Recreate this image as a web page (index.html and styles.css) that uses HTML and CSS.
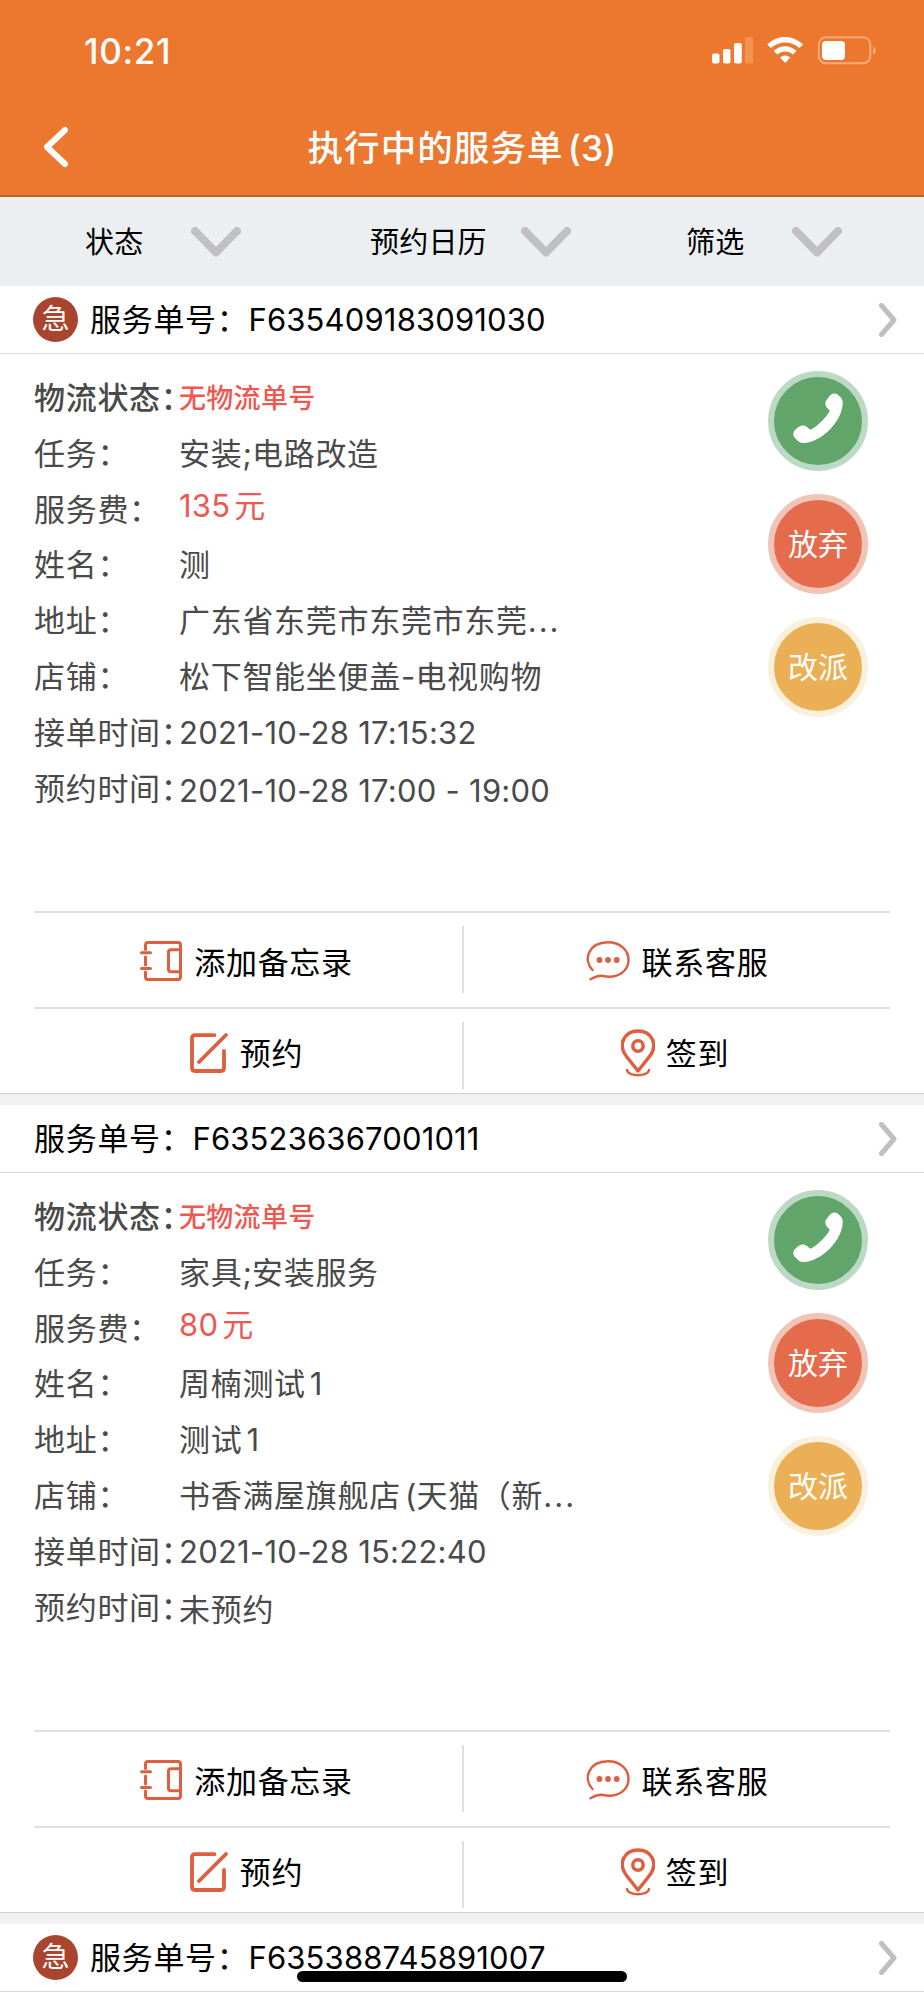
FILE: index.html
```
<!DOCTYPE html>
<html lang="zh-CN">

<head>
    <meta charset="UTF-8">
    <meta name="viewport" content="width=device-width, initial-scale=1.0">
    <title>执行中的服务单</title>
    <link rel="stylesheet" href="styles.css">
</head>

<body>
    <!-- shared icons -->
    <svg class="sprite">
        <symbol id="down" viewBox="0 0 50 30">
            <path d="M4 4 L25 25.500 L46 4" />
        </symbol>
        <symbol id="right" viewBox="0 0 18 34">
            <path d="M2.500 2.500 L15 17 L2.500 31.500" />
        </symbol>
        <symbol id="phone" viewBox="0 0 50 50">
            <path d="M33.200 7.500 L36.200 3.400 C39 0 42 -.3 45 1.800 L47.800 4.500 C49.500 6.300 49.800 8 49.700 11 C48.500 29 29 48.500 11.500 50 C8.500 50.200 7 49.700 5 48 L2 45 C-.3 42.500 -.3 39.500 2 37 L5.500 34 C8.500 31.800 11.500 32 14 34 L17 36.500 C20 37.300 35.500 23 36.700 17.500 L34 14.800 C32 12.500 31.800 9.800 33.200 7.500 Z" />
        </symbol>
        <symbol id="memo" viewBox="0 0 42 40">
            <path d="M5.500 8.500 V4 Q5.500 1.500 8 1.500 H38 Q40.500 1.500 40.500 4 V36 Q40.500 38.500 38 38.500 H8 Q5.500 38.500 5.500 36 V31 M5.500 16 V24 M1.500 11.700 H10.500 M1.500 27.500 H10.500 M40 8.700 H31 Q28.500 8.700 28.500 11 V28.500 Q28.500 30.700 31 30.700 H40" />
        </symbol>
        <symbol id="chat" viewBox="0 0 44 40">
            <path d="M6.500 29 C-3 19 2 1.500 22 1.300 C34 1.300 42.500 9 42.500 19 C42.500 30 32 38 17 35 C12 34 8 36.500 4.500 38.300" />
            <circle cx="13.500" cy="19" r="2.900" />
            <circle cx="22" cy="19" r="2.900" />
            <circle cx="30.700" cy="19" r="2.900" />
        </symbol>
        <symbol id="edit" viewBox="0 0 38 40">
            <path d="M24.500 2.200 H5 Q2 2.200 2 5.200 V35 Q2 38 5 38 H31 Q34 38 34 35 V18 M36 2 L9 29" />
        </symbol>
        <symbol id="pin" viewBox="0 0 34 48">
            <path d="M17 42 L5.500 27.500 C-4 15 4 2 17 2 C30 2 38 15 28.500 27.500 Z" />
            <circle cx="17" cy="17" r="5.200" />
            <path class="thin" d="M6 41 C6.500 48 27.500 48 28 41" />
        </symbol>
    </svg>

    <div class="app">
        <header>
            <div class="status-bar">
                <span class="time">10:21</span>
                <svg class="status-icons" width="166" height="30" viewBox="0 0 166 30">
                    <rect x="0" y="17.500" width="7.500" height="10" rx="2" />
                    <rect x="11" y="13" width="7.500" height="14.500" rx="2" />
                    <rect x="22" y="7" width="7.800" height="20.500" rx="2" />
                    <rect class="faded" x="33" y="1" width="8" height="26.500" rx="2" />
                    <path d="M55.300 8.500 C65 -1.500 81 -1.500 91 8.500 L87.500 12 C79.500 4.500 67 4.500 58.800 12 Z" />
                    <path d="M61.700 15 C68 8.500 78 8.500 84.500 15 L81 18.500 C76.500 14.500 70 14.500 65.300 18.500 Z" />
                    <path d="M68 21.500 C71 18.700 75.300 18.700 78.300 21.500 L73.200 27 Z" />
                    <rect class="battery" x="106.800" y="1.300" width="51.500" height="26" rx="7" />
                    <rect x="110" y="5" width="23" height="19" rx="4" />
                    <path class="nub" d="M161 10 Q167 14.500 161 19 Z" />
                </svg>
            </div>
            <div class="title-bar">
                <svg class="back" width="26" height="42" viewBox="0 0 26 42">
                    <path d="M22 4 L4 21 L22 38" />
                </svg>
                <h1>执行中的服务单<span class="num gap">(3)</span></h1>
            </div>
        </header>

        <nav class="filters">
            <div class="filter status"><span>状态</span><svg class="down"><use href="#down" /></svg></div>
            <div class="filter calendar"><span>预约日历</span><svg class="down"><use href="#down" /></svg></div>
            <div class="filter select"><span>筛选</span><svg class="down"><use href="#down" /></svg></div>
        </nav>

        <section class="order">
            <div class="order-head">
                <span class="urgent">急</span>
                <h2>服务单号：<span class="num">F635409183091030</span></h2>
                <svg class="right"><use href="#right" /></svg>
            </div>
            <div class="order-body">
                <dl class="info">
                    <dt class="strong">物流状态：</dt>
                    <dd class="logistics">无物流单号</dd>
                    <dt>任务：</dt>
                    <dd>安装<span class="num">;</span>电路改造</dd>
                    <dt>服务费：</dt>
                    <dd class="price"><span class="num">135</span><span class="gap">元</span></dd>
                    <dt>姓名：</dt>
                    <dd>测</dd>
                    <dt>地址：</dt>
                    <dd>广东省东莞市东莞市东莞<span class="dots">...</span></dd>
                    <dt>店铺：</dt>
                    <dd>松下智能坐便盖<span class="num">-</span>电视购物</dd>
                    <dt>接单时间：</dt>
                    <dd class="num">2021-10-28 17:15:32</dd>
                    <dt>预约时间：</dt>
                    <dd class="num booked">2021-10-28 17:00 - 19:00</dd>
                </dl>
                <div class="actions">
                    <button class="round call"><svg><use href="#phone" /></svg></button>
                    <button class="round drop">放弃</button>
                    <button class="round assign">改派</button>
                </div>
            </div>
            <div class="tools">
                <div class="tool"><svg class="icon memo"><use href="#memo" /></svg>添加备忘录</div>
                <div class="tool"><svg class="icon chat"><use href="#chat" /></svg>联系客服</div>
            </div>
            <div class="tools last">
                <div class="tool"><svg class="icon edit"><use href="#edit" /></svg>预约</div>
                <div class="tool"><svg class="icon pin"><use href="#pin" /></svg>签到</div>
            </div>
        </section>

        <section class="order">
            <div class="order-head">
                <h2>服务单号：<span class="num">F635236367001011</span></h2>
                <svg class="right"><use href="#right" /></svg>
            </div>
            <div class="order-body">
                <dl class="info">
                    <dt class="strong">物流状态：</dt>
                    <dd class="logistics">无物流单号</dd>
                    <dt>任务：</dt>
                    <dd>家具<span class="num">;</span>安装服务</dd>
                    <dt>服务费：</dt>
                    <dd class="price"><span class="num">80</span><span class="gap">元</span></dd>
                    <dt>姓名：</dt>
                    <dd>周楠测试<span class="num gap">1</span></dd>
                    <dt>地址：</dt>
                    <dd>测试<span class="num gap">1</span></dd>
                    <dt>店铺：</dt>
                    <dd>书香满屋旗舰店<span class="num gap">(</span>天猫（新<span class="dots">...</span></dd>
                    <dt>接单时间：</dt>
                    <dd class="num">2021-10-28 15:22:40</dd>
                    <dt>预约时间：</dt>
                    <dd class="booked">未预约</dd>
                </dl>
                <div class="actions">
                    <button class="round call"><svg><use href="#phone" /></svg></button>
                    <button class="round drop">放弃</button>
                    <button class="round assign">改派</button>
                </div>
            </div>
            <div class="tools">
                <div class="tool"><svg class="icon memo"><use href="#memo" /></svg>添加备忘录</div>
                <div class="tool"><svg class="icon chat"><use href="#chat" /></svg>联系客服</div>
            </div>
            <div class="tools last">
                <div class="tool"><svg class="icon edit"><use href="#edit" /></svg>预约</div>
                <div class="tool"><svg class="icon pin"><use href="#pin" /></svg>签到</div>
            </div>
        </section>

        <section class="order">
            <div class="order-head">
                <span class="urgent">急</span>
                <h2>服务单号：<span class="num">F635388745891007</span></h2>
                <svg class="right"><use href="#right" /></svg>
            </div>
        </section>

        <div class="home-bar"></div>
    </div>
</body>

</html>
```

FILE: styles.css
```
* {
    margin: 0;
    padding: 0;
    box-sizing: border-box;
}

body {
    font-family: Inter, "Noto Sans CJK SC", sans-serif;
    font-size: 31px;
    letter-spacing: 0.7px;
    color: #000;
    background: #fff;
}

.sprite {
    display: none;
}

svg {
    flex-shrink: 0;
}

.app {
    position: relative;
    width: 924px;
    height: 2000px;
    overflow: hidden;
}

.num {
    letter-spacing: 0.15px;
}

.gap {
    margin-left: 4px;
}

.dots {
    letter-spacing: 2px;
}

/* header */
header {
    height: 197px;
    background: #ec772f;
    border-bottom: 2px solid #bb5f26;
    color: #fff;
}

.status-bar {
    height: 101px;
    padding: 0 46px 0 84px;
    display: flex;
    align-items: center;
    justify-content: space-between;
}

.time {
    font-size: 35px;
    font-weight: 500;
    letter-spacing: 0.7px;
}

.status-icons {
    fill: #fff;
}

.status-icons .faded {
    fill: #f2944f;
}

.status-icons .battery {
    fill: none;
    stroke: #f5ab78;
    stroke-width: 2;
}

.status-icons .nub {
    fill: #f5ab78;
}

.title-bar {
    height: 92px;
    padding-left: 43px;
    display: flex;
    align-items: center;
}

.back {
    fill: none;
    stroke: #fff;
    stroke-width: 6;
    stroke-linecap: round;
    stroke-linejoin: round;
}

.title-bar h1 {
    flex: 1;
    padding: 0 69px 4px 0;
    font-size: 35.5px;
    font-weight: 500;
    letter-spacing: 1.1px;
    text-align: center;
}

/* filters */
.filters {
    display: grid;
    grid-template-columns: 308px 308px 308px;
    height: 89px;
    background: #eceff1;
}

.filter {
    display: flex;
    align-items: center;
    font-size: 29px;
    letter-spacing: 0.2px;
}

.filter span {
    padding-bottom: 4px;
}

.filter.status {
    padding-left: 85px;
    gap: 48px;
}

.filter.calendar {
    padding-left: 62px;
    gap: 34px;
}

.filter.select {
    padding-left: 70px;
    gap: 48px;
}

.down {
    width: 50px;
    height: 30px;
    fill: none;
    stroke: #bfbfc4;
    stroke-width: 8;
    stroke-linecap: round;
    stroke-linejoin: round;
}

/* orders */
.order {
    height: 819px;
    border-bottom: 11px solid #f1f1f1;
}

.order-head {
    height: 68px;
    padding: 0 27px 0 33px;
    display: flex;
    align-items: center;
    border-bottom: 1px solid #d8d8d8;
}

.order-head h2 {
    flex: 1;
    padding: 0 0 5px 1px;
    font-size: 31px;
    font-weight: 400;
}

.urgent {
    width: 45px;
    height: 45px;
    margin-right: 11px;
    border-radius: 50%;
    background: #a9442e;
    color: #fff;
    font-size: 28px;
    line-height: 44px;
    letter-spacing: 0;
    text-align: center;
}

.right {
    width: 18px;
    height: 34px;
    fill: none;
    stroke: #bfbfc4;
    stroke-width: 5;
    stroke-linecap: round;
    stroke-linejoin: round;
}

.order-body {
    height: 557px;
    padding: 16px 56px 0 34px;
    display: flex;
    justify-content: space-between;
}

.info {
    display: grid;
    grid-template-columns: 145px 480px;
    grid-auto-rows: 55.800px;
    line-height: 55.800px;
    color: #4a4a4a;
    white-space: nowrap;
}

/* half width colon so the long labels stay in their column */
.info dt {
    font-feature-settings: "halt";
}

.info .num {
    letter-spacing: 0.25px;
}

.info .strong {
    font-weight: 500;
}

.info .logistics {
    color: #ee5850;
    font-size: 27px;
    font-weight: 500;
    line-height: 57px;
    letter-spacing: 0.3px;
}

.info .price {
    color: #ee5850;
    line-height: 48px;
}

.info .booked {
    line-height: 60px;
}

.actions {
    display: flex;
    flex-direction: column;
    gap: 23px;
    padding-top: 1px;
}

.round {
    width: 100px;
    height: 100px;
    padding-bottom: 4px;
    display: flex;
    align-items: center;
    justify-content: center;
    border: 6px solid;
    border-radius: 50%;
    color: #fff;
    font-family: inherit;
    font-size: 30px;
}

.round svg {
    width: 50px;
    height: 50px;
    margin-top: -3px;
    fill: #fff;
}

.call {
    background: #61a56b;
    border-color: #bcdac3;
}

.drop {
    background: #e56b4d;
    border-color: #f1c4b8;
}

.assign {
    background: #ebb056;
    border-color: #f9f1dc;
}

/* bottom buttons */
.tools {
    height: 96px;
    margin: 0 34px;
    display: grid;
    grid-template-columns: 430px 426px;
    border-top: 2px solid #e0e0e0;
}

.tool {
    display: flex;
    align-items: center;
    justify-content: center;
    padding: 0 5px 0 0;
}

.tool:last-child {
    padding-right: 0;
}

.tool:first-child {
    background: linear-gradient(#e0e0e0, #e0e0e0) right 13px / 2px 67px no-repeat;
}

.last {
    height: 87px;
    margin: 0;
    padding: 0 34px;
    border-top: 0;
    border-bottom: 1px solid #d0d0d0;
    background: linear-gradient(#e0e0e0, #e0e0e0) center top / 856px 2px no-repeat;
}

.last .tool:first-child {
    background-position: right 15px;
}

.last .tool {
    padding-top: 3px;
}

.last .tool:last-child {
    padding-right: 4px;
}

.icon {
    position: relative;
    top: 1px;
    margin-right: 12px;
    fill: none;
    stroke: #de5f40;
    stroke-width: 3;
    stroke-linecap: round;
    stroke-linejoin: round;
    overflow: visible;
}

.memo {
    width: 42px;
    height: 40px;
}

.chat {
    width: 44px;
    height: 40px;
    stroke-width: 2.500;
}

#chat circle {
    fill: #de5f40;
    stroke: none;
}

.edit {
    width: 38px;
    height: 40px;
    stroke-width: 3.800;
}

.pin {
    width: 34px;
    height: 48px;
    margin-right: 11px;
    stroke-width: 3.500;
}

#pin .thin {
    stroke-width: 2.500;
}

.home-bar {
    position: absolute;
    left: 297px;
    bottom: 18px;
    width: 330px;
    height: 11px;
    border-radius: 6px;
    background: #000;
}
```
